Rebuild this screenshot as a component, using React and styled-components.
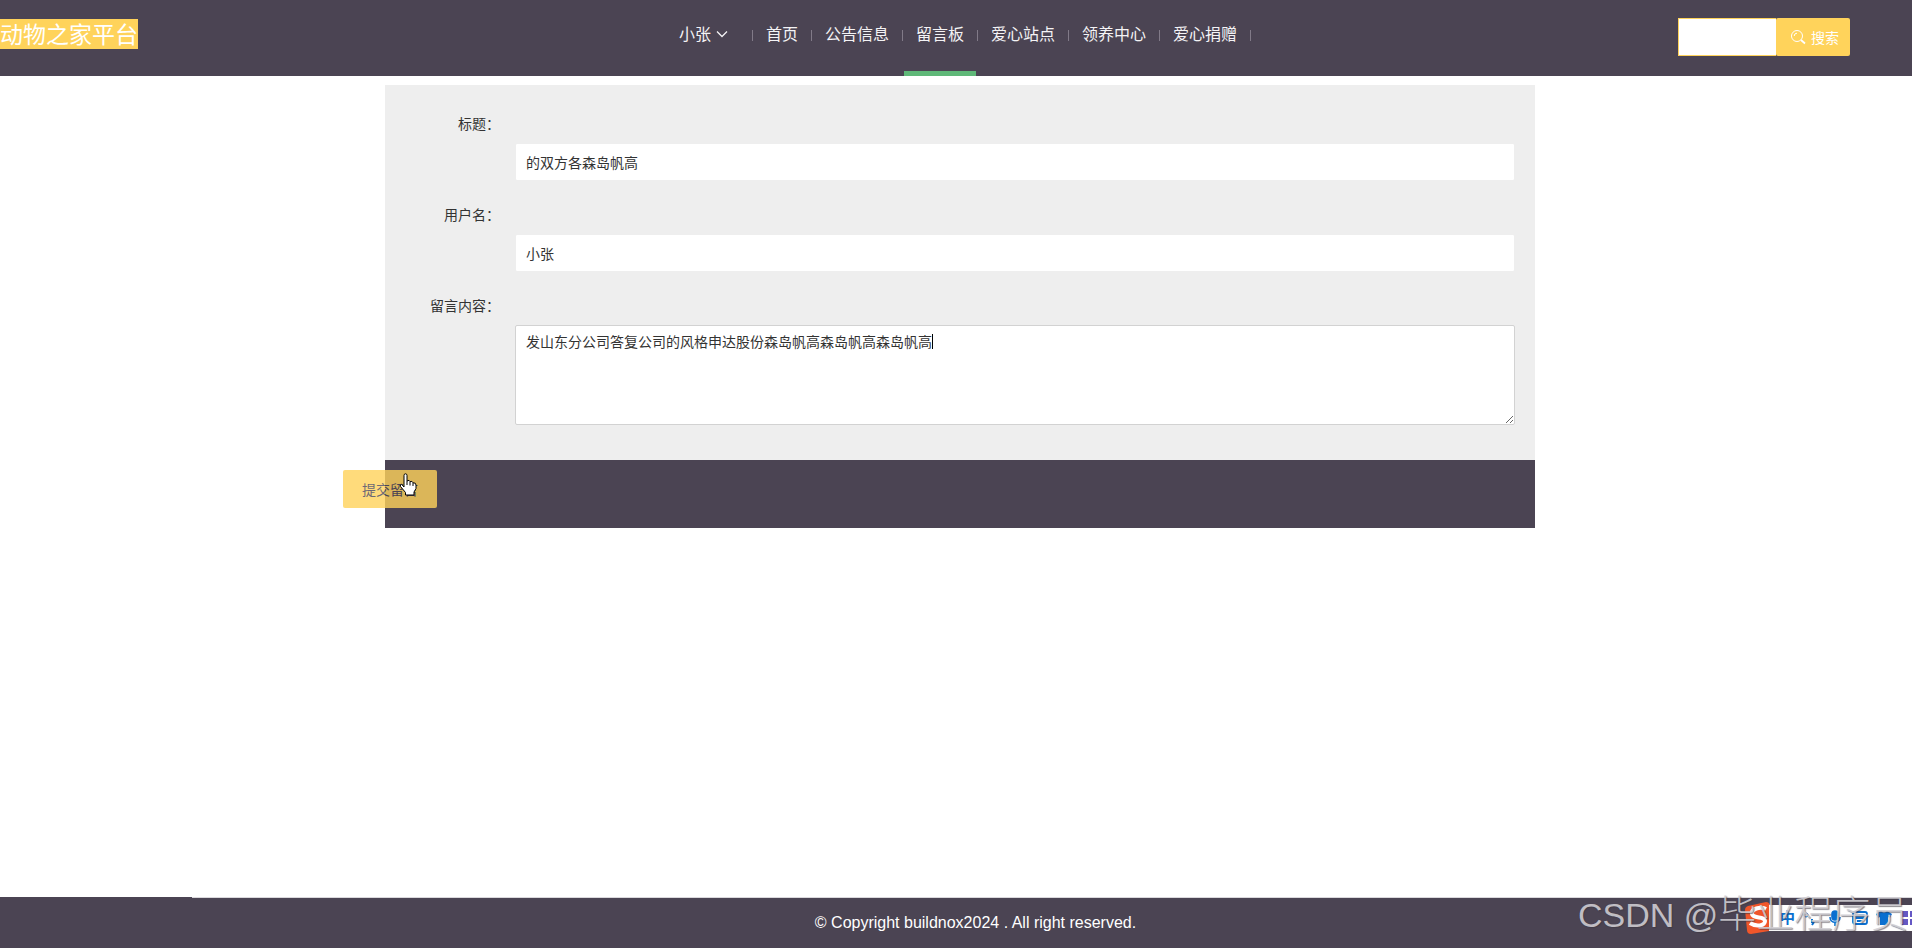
import React, { useState } from 'react';
import styled, { createGlobalStyle } from 'styled-components';

const GlobalStyle = createGlobalStyle`
  * {
    box-sizing: border-box;
  }
  body {
    margin: 0;
    background: #fff;
    color: #333;
    font: 14px/20px "Liberation Sans", "Noto Sans CJK SC", sans-serif;
    overflow: hidden;
  }
  input, textarea, button {
    font-family: inherit;
    font-size: 14px;
    color: inherit;
    outline: none;
  }
`;

const Page = styled.div`
  position: relative;
  display: flex;
  flex-direction: column;
  height: 948px;
`;

const Header = styled.header`
  display: grid;
  grid-template-columns: 667px 1fr 234px;
  height: 76px;
  background: #4b4453;
`;

const Logo = styled.h1`
  justify-self: start;
  margin: 19px 0 0;
  height: 30px;
  background: #ffd35b;
  color: #fff;
  font-size: 23px;
  font-weight: 400;
  line-height: 32px;
`;

const Nav = styled.nav`
  display: flex;
  color: #f4f3f5;
  font-size: 16px;
  line-height: 70px;
`;

const NavItem = styled.a`
  height: 76px;
  padding: 0 12px;
  border-bottom: ${(p) => (p.$active ? '5px solid #5fb878' : 'none')};
`;

const UserItem = styled(NavItem)`
  display: flex;
  width: 84px;

  svg {
    margin: 28px 0 0 5px;
  }
`;

const Divider = styled.span`
  width: 3px;
  height: 11px;
  margin-top: 30px;
  border-left: 1px solid #817a88;
  transform: translateX(1px);
`;

const Search = styled.form`
  display: flex;
  margin-top: 18px;
  height: 38px;
`;

const SearchInput = styled.input`
  width: 98px;
  height: 38px;
  border: 1px solid #ffd35b;
  border-right: none;
  background: #fff;
`;

const SearchButton = styled.button`
  display: flex;
  align-items: center;
  gap: 5px;
  width: 74px;
  padding: 0 0 0 14px;
  border: none;
  border-radius: 2px;
  background: #ffd35b;
  color: #fff;
`;

const Container = styled.main`
  width: 1150px;
  margin: 9px 0 0 385px;
`;

const Form = styled.form`
  height: 375px;
  padding: 20px;
  background: #eee;
`;

const FormItem = styled.div`
  margin-bottom: 15px;
`;

const Label = styled.label`
  display: block;
  width: 110px;
  height: 38px;
  padding: 9px 15px 9px 0;
  text-align: right;
`;

const Field = styled.div`
  margin-left: 110px;
`;

const Input = styled.input`
  display: block;
  width: 100%;
  height: 38px;
  padding: 0 10px 1px;
  border: 1px solid #eee;
  border-radius: 2px;
  background: #fff;
`;

const TextArea = styled.textarea`
  display: block;
  width: 100%;
  height: 100px;
  padding: 6px 10px;
  border: 1px solid #d2d2d2;
  border-radius: 2px;
  background: #fff;
  line-height: 20px;
  resize: vertical;
`;

const FormFooter = styled.div`
  height: 68px;
  padding-top: 10px;
  background: #4b4453;
`;

const Submit = styled.button`
  display: block;
  width: 94px;
  height: 38px;
  margin-left: -42px;
  padding: 0 0 1px;
  border: none;
  border-radius: 2px;
  background: #ffd35b;
  color: #4b4453;
  opacity: 0.8;
`;

const Footer = styled.footer`
  height: 51px;
  margin-top: auto;
  padding-left: 39px;
  background: #4b4453;
  color: #fff;
  font-size: 16px;
  line-height: 52px;
  text-align: center;
`;

const FooterEdge = styled.div`
  position: absolute;
  top: 897px;
  left: 192px;
  right: 0;
  height: 1px;
  background: #dad8dc;
`;

const Pointer = styled.svg`
  position: absolute;
  left: 399px;
  top: 473px;
`;

const Caret = styled.i`
  position: absolute;
  left: 932px;
  top: 334px;
  width: 1px;
  height: 15px;
  background: #000;
`;

const InputBar = styled.div`
  position: absolute;
  left: 1744px;
  top: 901px;
  display: flex;
  align-items: center;
  width: 168px;
  height: 34px;
  overflow: hidden;
`;

const BarBody = styled.div`
  display: flex;
  align-items: center;
  flex: none;
  width: 160px;
  height: 26px;
  margin-left: -4px;
  padding-left: 11px;
  background: #fff;
  color: #0a6fd0;
  font-size: 15px;
  font-weight: 700;
`;

const BarIcon = styled.svg`
  flex: none;
  margin-left: ${(p) => p.$gap || 0}px;
`;

const Watermark = styled.div`
  position: absolute;
  left: 1578px;
  top: 893px;
  color: rgba(210, 208, 213, 0.88);
  font-size: 34px;
  font-weight: 300;
  line-height: 42px;
  text-shadow: 1px 1px 1px rgba(60, 55, 65, 0.6);
  white-space: nowrap;

  span {
    font-size: 38px;
  }
`;

const links = ['首页', '公告信息', '留言板', '爱心站点', '领养中心', '爱心捐赠'];

function TopBar() {
  return (
    <Header>
      <Logo>动物之家平台</Logo>
      <Nav>
        <UserItem>
          小张
          <svg width="12" height="12" viewBox="0 0 12 12" fill="none" stroke="#f4f3f5" strokeWidth="1.3">
            <path d="M1 3.5 6 8.5 11 3.5" />
          </svg>
        </UserItem>
        <Divider />
        {links.map((link) => (
          <React.Fragment key={link}>
            <NavItem $active={link === '留言板'}>{link}</NavItem>
            <Divider />
          </React.Fragment>
        ))}
      </Nav>
      <Search>
        <SearchInput />
        <SearchButton type="button">
          <svg width="16" height="16" viewBox="0 0 16 16" fill="none" stroke="#fff">
            <circle cx="7" cy="7" r="5.5" />
            <path d="M4.2 7A2.8 2.8 0 0 1 7 4.2" />
            <path d="m11 11 4 3.5" strokeWidth="1.8" />
          </svg>
          搜索
        </SearchButton>
      </Search>
    </Header>
  );
}

function MessageForm() {
  const [title, setTitle] = useState('的双方各森岛帆高');
  const [user, setUser] = useState('小张');
  const [content, setContent] = useState('发山东分公司答复公司的风格申达股份森岛帆高森岛帆高森岛帆高');

  return (
    <Container>
      <Form>
        <FormItem>
          <Label>标题：</Label>
          <Field><Input value={title} onChange={(e) => setTitle(e.target.value)} /></Field>
        </FormItem>
        <FormItem>
          <Label>用户名：</Label>
          <Field><Input value={user} onChange={(e) => setUser(e.target.value)} /></Field>
        </FormItem>
        <FormItem>
          <Label>留言内容：</Label>
          <Field>
            <TextArea spellCheck={false} value={content} onChange={(e) => setContent(e.target.value)} />
          </Field>
        </FormItem>
      </Form>
      <FormFooter>
        <Submit type="button">提交留言</Submit>
      </FormFooter>
    </Container>
  );
}

function ImeBar() {
  return (
    <InputBar>
      <BarIcon width="29" height="34" viewBox="0 0 29 34">
        <path d="M4 5 22 1Q25 1 26 4L28 26Q28 29 25 30L7 33Q3 33 3 29L1 9Q1 6 4 5Z" fill="#f0562a" />
        <path d="M22 8C16 5 7 8 8 13 9 18 21 15 21 20 21 25 12 26 6 22" fill="none" stroke="#fff" strokeWidth="4" />
      </BarIcon>
      <BarBody>
        中
        <BarIcon $gap={8} width="14" height="16" viewBox="0 0 14 16" fill="none" stroke="#0a6fd0">
          <circle cx="3" cy="5" r="2" />
          <path d="M9 9v4M11 12l-2 3" strokeWidth="2" />
        </BarIcon>
        <BarIcon $gap={12} width="12" height="18" viewBox="0 0 12 18" fill="none" stroke="#0a6fd0" strokeWidth="1.6">
          <rect x="3" y="2" width="6" height="9" rx="3" fill="#0a6fd0" />
          <path d="M1 8c0 7 10 7 10 0M6 13v4" />
        </BarIcon>
        <BarIcon $gap={11} width="16" height="14" viewBox="0 0 16 14" fill="none" stroke="#0a6fd0" strokeWidth="1.8">
          <rect x="1" y="1" width="14" height="12" rx="2" />
          <path d="M3.5 4.5h9M3.5 7h9M5 10h6" />
        </BarIcon>
        <BarIcon $gap={8} width="16" height="16" viewBox="0 0 16 16">
          <path d="M5 1Q8 4 11 1L16 4 14 8 12 7V15H4V7L2 8 0 4Z" fill="#0a6fd0" />
        </BarIcon>
        <BarIcon $gap={10} width="14" height="14" viewBox="0 0 14 14" fill="#6558c4">
          <path d="M0 0h6v6H0zM8 0h6v6H8zM0 8h6v6H0zM8 8h6v6H8z" />
        </BarIcon>
      </BarBody>
    </InputBar>
  );
}

export default function App() {
  return (
    <Page>
      <GlobalStyle />
      <TopBar />
      <MessageForm />
      <Footer>© Copyright buildnox2024 . All right reserved.</Footer>
      <FooterEdge />
      <Caret />
      <Pointer width="18" height="24" viewBox="0 0 18 24">
        <path
          d="M5 14V2.5Q5 .8 6.5 .8T8 2.5V8Q10.500 6.300 11 8.700 13.300 7.500 14 9.800 17 9.500 17 12V15.500L15 19V22H6.500V19.500L1.500 13.500Q.8 11.300 2.500 11.200Z"
          fill="#fff"
          stroke="#000"
        />
        <path d="M8 8v4M11 9v3.500M14 10v3" stroke="#000" />
      </Pointer>
      <ImeBar />
      <Watermark>CSDN @<span>毕业程序员</span></Watermark>
    </Page>
  );
}
